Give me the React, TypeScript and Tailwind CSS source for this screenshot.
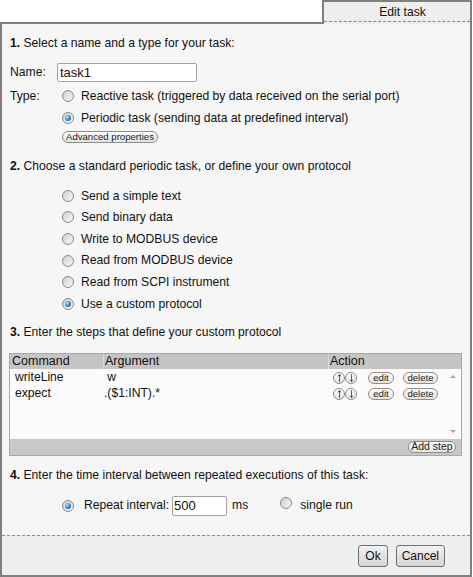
import React from "react";

function Radio({ checked }: { checked?: boolean }) {
  return (
    <span className="inline-flex h-[12px] w-[12px] shrink-0 items-center justify-center rounded-full border border-[#8a8a8a] bg-[linear-gradient(135deg,#cfcfcf,#f8f8f8)]">
      {checked && (
        <span className="h-[6px] w-[6px] rounded-full bg-[radial-gradient(circle_at_35%_35%,#b4e6ff,#2a82c8_55%,#0b3a68)]" />
      )}
    </span>
  );
}

function Pill({ children, className = "" }: { children: React.ReactNode; className?: string }) {
  return (
    <span
      className={
        "inline-flex h-[12px] items-center justify-center whitespace-nowrap rounded-full border border-[#8c8c8c] bg-[linear-gradient(#fdfdfd,#e4e4e4)] leading-none text-[#222] " +
        className
      }
    >
      {children}
    </span>
  );
}

function Arrow({ down }: { down?: boolean }) {
  return (
    <svg width="5" height="8" viewBox="0 0 5 8" className={down ? "rotate-180" : ""}>
      <path d="M2.5 0.5 L2.5 8 M0.8 2.3 L2.5 0.5 L4.2 2.3" stroke="#3b4f73" strokeWidth="0.9" fill="none" />
    </svg>
  );
}

function Button({ children, className = "" }: { children: React.ReactNode; className?: string }) {
  return (
    <span
      className={
        "inline-flex h-[22px] items-center rounded-[3px] border border-[#707070] bg-[linear-gradient(#f3f3f3,#e2e2e2_50%,#d6d6d6)] text-[12px] text-[#111] " +
        className
      }
    >
      {children}
    </span>
  );
}

const protocols = [
  { label: "Send a simple text" },
  { label: "Send binary data" },
  { label: "Write to MODBUS device" },
  { label: "Read from MODBUS device" },
  { label: "Read from SCPI instrument" },
  { label: "Use a custom protocol", checked: true },
];

const steps = [
  { command: "writeLine", argument: "\u00a0w" },
  { command: "expect", argument: ".($1:INT).*" },
];

export default function App() {
  return (
    <div className="h-[577px] w-[473px] bg-white font-['Liberation_Sans',Arial,sans-serif] text-[12.15px] text-[#111]">
      {/* Tab row */}
      <div className="flex h-[24px] w-[472px]">
        <div className="flex-1 border-b-2 border-[#808080]" />
        <div className="w-[150px] border-x-2 border-t-2 border-[#808080] bg-[#eeeeee]">
          <div className="h-[20px] border-b border-dashed border-[#8a8a8a] pl-[11px] text-center leading-[20px]">
            Edit task
          </div>
        </div>
      </div>

      <div className="w-[472px] border-x-2 border-b-2 border-[#808080]">
        {/* Body */}
        <div className="h-[511px] bg-[#f6f6f6] pl-[8px]">
          <div className="pt-[11px] leading-[16px]">
            <b>1.</b> Select a name and a type for your task:
          </div>

          <div className="mt-[12px] flex h-[19px] items-center">
            <span className="w-[47px]">Name:</span>
            <span className="flex h-[19px] w-[140px] items-center rounded-[2px] border border-[#a3a3a3] bg-white pl-[2px] text-[13px]">
              task1
            </span>
          </div>

          <div className="mt-[3px] flex">
            <span className="w-[52px] leading-[22px]">Type:</span>
            <div className="flex flex-col">
              <div className="flex h-[22px] items-center gap-[7px]">
                <Radio />
                <span>Reactive task (triggered by data received on the serial port)</span>
              </div>
              <div className="flex h-[22px] items-center gap-[7px]">
                <Radio checked />
                <span>Periodic task (sending data at predefined interval)</span>
              </div>
              <div className="mt-[2px] flex">
                <Pill className="px-[3px] text-[9.6px]">Advanced properties</Pill>
              </div>
            </div>
          </div>

          <div className="mt-[15px] leading-[16px]">
            <b>2.</b> Choose a standard periodic task, or define your own protocol
          </div>

          <div className="mt-[11px] pl-[52px]">
            {protocols.map((p) => (
              <div key={p.label} className="flex h-[21.6px] items-center gap-[7px]">
                <Radio checked={p.checked} />
                <span>{p.label}</span>
              </div>
            ))}
          </div>

          <div className="mt-[9px] leading-[16px]">
            <b>3.</b> Enter the steps that define your custom protocol
          </div>

          <div className="ml-[-1px] mt-[13px] w-[453px] border border-[#a8a8a8]">
            <div className="flex h-[15px] items-center bg-[#c4c4c4] text-[12.5px] leading-[15px]">
              <span className="w-[93px] pl-[2px]">Command</span>
              <span className="h-full w-[225px] border-l border-[#dadada] pl-[1px]">Argument</span>
              <span className="h-full flex-1 border-l border-[#dadada] pl-[1px]">Action</span>
            </div>
            <div className="flex h-[70px] bg-[#fbfbfb]">
              <div className="flex-1 pt-[1px]">
                {steps.map((s) => (
                  <div key={s.command} className="flex h-[16px] items-center">
                    <span className="w-[93px] pl-[5px]">{s.command}</span>
                    <span className="w-[225px] pl-[1px]">{s.argument}</span>
                    <span className="flex items-center pl-[5px]">
                      <Pill className="w-[12px]">
                        <Arrow />
                      </Pill>
                      <Pill className="w-[12px]">
                        <Arrow down />
                      </Pill>
                      <Pill className="ml-[11px] w-[26px] text-[9.6px]">edit</Pill>
                      <Pill className="ml-[9px] w-[35px] text-[9.6px]">delete</Pill>
                    </span>
                  </div>
                ))}
              </div>
              <div className="flex w-[16px] flex-col items-center justify-between py-[6px]">
                <span className="h-0 w-0 border-x-[3px] border-b-[3px] border-x-transparent border-b-[#a6a6a6]" />
                <span className="h-0 w-0 border-x-[3px] border-t-[3px] border-x-transparent border-t-[#a6a6a6]" />
              </div>
            </div>
            <div className="flex h-[16px] items-center justify-end bg-[#c8c8c8] pr-[5px]">
              <Pill className="w-[48px] text-[10.5px]">Add step</Pill>
            </div>
          </div>

          <div className="mt-[11px] leading-[16px]">
            <b>4.</b> Enter the time interval between repeated executions of this task:
          </div>

          <div className="mt-[12px] flex h-[22px] items-center pl-[52px]">
            <Radio checked />
            <span className="ml-[10px]">Repeat interval:</span>
            <span className="ml-[3px] flex h-[20px] w-[55px] items-center rounded-[2px] border border-[#a3a3a3] bg-white pl-[1px] text-[13px]">
              500
            </span>
            <span className="ml-[5px]">ms</span>
            <span className="ml-[32px]">
              <Radio />
            </span>
            <span className="ml-[8px]">single run</span>
          </div>
        </div>

        {/* Footer */}
        <div className="flex h-[40px] justify-end gap-[8px] border-t border-dashed border-[#8a8a8a] bg-[#efefef] pr-[25px] pt-[9px]">
          <Button className="px-[6px]">Ok</Button>
          <Button className="px-[5px]">Cancel</Button>
        </div>
      </div>
    </div>
  );
}
